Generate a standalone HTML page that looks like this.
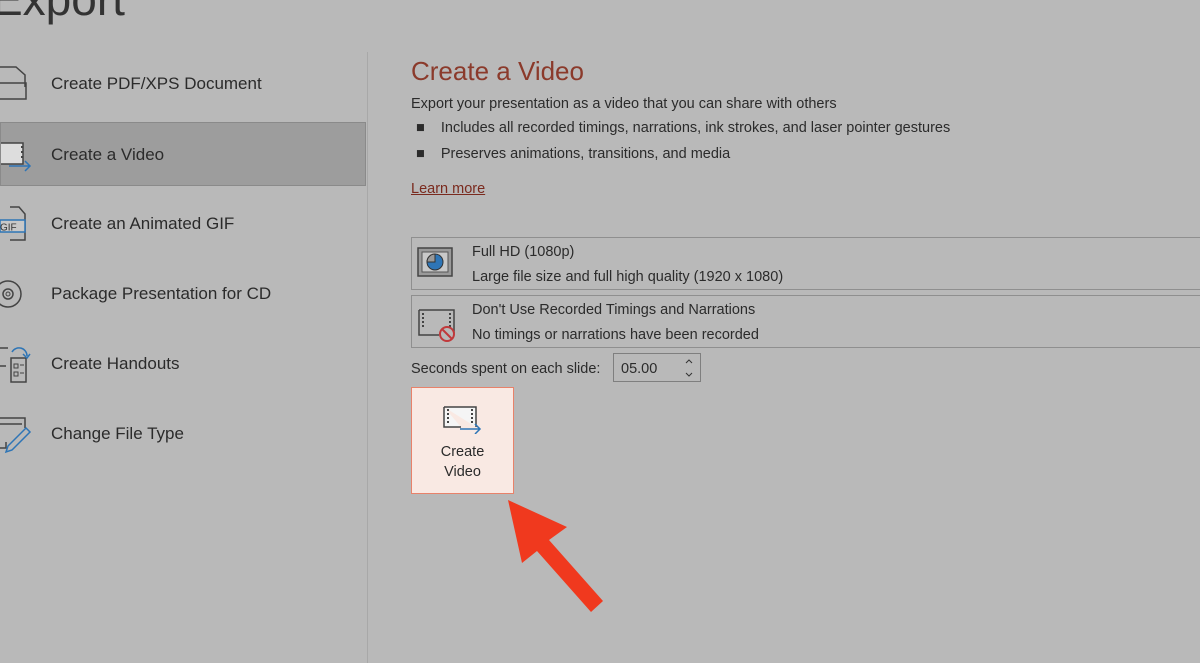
<!DOCTYPE html>
<html><head><style>
body{margin:0;width:1200px;height:663px;background:#b9b9b9;font-family:"Liberation Sans",sans-serif;color:#2b2b2b;position:relative;overflow:hidden}
.a{position:absolute}
.item{position:absolute;left:0;width:366px;height:64px;font-size:17px;line-height:64px}
.item span{position:absolute;left:51px}
.sel{background:#9d9d9d;border:1px solid #8a8a8a;box-sizing:border-box}
.sel span{left:50px}
.box{position:absolute;left:411px;width:800px;height:53px;border:1px solid #8f8f8f;box-sizing:border-box;font-size:14.5px}
</style></head><body>
<div class="a" style="left:-8px;top:-28px;font-size:46px;color:#333;font-weight:300">Export</div>
<div class="a" style="left:367px;top:52px;width:1px;height:611px;background:#a8a8a8"></div>

<div class="item" style="top:52px"><svg class="a" style="left:0;top:14px" width="30" height="36"><path d="M0 1h16l9 8v12M0 17h26v16H0" fill="none" stroke="#444" stroke-width="1.5"/></svg><span>Create PDF/XPS Document</span></div>
<div class="item sel" style="top:122px"><svg class="a" style="left:0;top:19px" width="32" height="30"><path d="M0 1h22v21H0" fill="#ddd" stroke="#444" stroke-width="1.5"/><path d="M21 4v2M21 9v2M21 14v2" stroke="#444" stroke-width="2"/><path d="M8 24h20M24 19l5 5-5 5" fill="none" stroke="#2e75b6" stroke-width="1.5"/></svg><span>Create a Video</span></div>
<div class="item" style="top:192px"><svg class="a" style="left:0;top:14px" width="30" height="36"><path d="M10 1h9l6 7v26H10" fill="none" stroke="#444" stroke-width="1.5"/><rect x="0" y="14" width="25" height="12" fill="#c8c8c8" stroke="#2e75b6" stroke-width="1.5"/><text x="0" y="24.5" font-size="10" font-family="Liberation Sans" fill="#333">GIF</text></svg><span>Create an Animated GIF</span></div>
<div class="item" style="top:262px"><svg class="a" style="left:-6px;top:14px" width="36" height="36"><circle cx="14" cy="18" r="13" fill="none" stroke="#444" stroke-width="1.5"/><circle cx="14" cy="18" r="5" fill="none" stroke="#444" stroke-width="1.5"/><circle cx="14" cy="18" r="2" fill="none" stroke="#444"/></svg><span>Package Presentation for CD</span></div>
<div class="item" style="top:332px"><svg class="a" style="left:0;top:12px" width="32" height="40"><path d="M0 4h8M0 22h6" stroke="#444" stroke-width="1.5"/><rect x="11" y="14" width="15" height="24" fill="none" stroke="#444" stroke-width="1.5"/><path d="M14 20h4v4h-4zM14 28h4v4h-4zM20 21h4M20 29h4" fill="none" stroke="#444"/><path d="M12 8a8 8 0 0 1 15 4M23 10l4 4 3-4" fill="none" stroke="#2e75b6" stroke-width="1.5"/></svg><span>Create Handouts</span></div>
<div class="item" style="top:402px"><svg class="a" style="left:0;top:14px" width="32" height="40"><path d="M0 2h25v10M0 8h22M0 32h6v-6" fill="none" stroke="#444" stroke-width="1.5"/><path d="M26 12l4 4-18 18-6 2 2-6z" fill="none" stroke="#2e75b6" stroke-width="1.5"/></svg><span>Change File Type</span></div>

<div class="a" style="left:411px;top:56px;font-size:26px;color:#8b3a2b">Create a Video</div>
<div class="a" style="left:411px;top:96px;font-size:14.5px">Export your presentation as a video that you can share with others</div>
<div class="a" style="left:416px;top:120px;font-size:14.5px">■&nbsp;&nbsp;&nbsp;&nbsp;Includes all recorded timings, narrations, ink strokes, and laser pointer gestures</div>
<div class="a" style="left:416px;top:146px;font-size:14.5px">■&nbsp;&nbsp;&nbsp;&nbsp;Preserves animations, transitions, and media</div>
<div class="a" style="left:411px;top:181px;font-size:14.5px;color:#7a2a1e;text-decoration:underline">Learn more</div>

<div class="box" style="top:237px"><svg class="a" style="left:5px;top:9px" width="38" height="32"><rect x="1" y="1" width="34" height="28" fill="#9a9a9a" stroke="#444" stroke-width="1.5"/><rect x="5" y="5" width="26" height="20" fill="#c9c9c9" stroke="#555"/><circle cx="18" cy="15" r="8" fill="#2e75b6" stroke="#333"/><path d="M18 15V7a8 8 0 0 0-8 8z" fill="#999" stroke="#333"/></svg><div class="a" style="left:60px;top:6px">Full HD (1080p)</div><div class="a" style="left:60px;top:31px">Large file size and full high quality (1920 x 1080)</div></div>
<div class="box" style="top:295px"><svg class="a" style="left:6px;top:13px" width="40" height="34"><path d="M1 1h35v23M1 1v25h20" fill="none" stroke="#444" stroke-width="1.5"/><path d="M5 4v16M32 4v16" stroke="#444" stroke-width="2" stroke-dasharray="2 2"/><circle cx="29" cy="25" r="7" fill="none" stroke="#c0393b" stroke-width="2"/><path d="M24 20l10 10" stroke="#c0393b" stroke-width="2"/></svg><div class="a" style="left:60px;top:6px">Don't Use Recorded Timings and Narrations</div><div class="a" style="left:60px;top:31px">No timings or narrations have been recorded</div></div>

<div class="a" style="left:411px;top:361px;font-size:14.5px">Seconds spent on each slide:</div>
<div class="a" style="left:613px;top:353px;width:88px;height:29px;border:1px solid #7f7f7f;box-sizing:border-box;font-size:14.5px"><span class="a" style="left:7px;top:7px">05.00</span><svg class="a" style="left:70px;top:4px" width="10" height="20"><path d="M2 5l3-3 3 3M2 15l3 3 3-3" fill="none" stroke="#333" stroke-width="1"/></svg></div>

<div class="a" style="left:411px;top:387px;width:103px;height:107px;background:#f9e9e3;border:1px solid #e8826a;box-sizing:border-box;text-align:center;font-size:14.5px;line-height:20px">
<svg style="display:block;margin:18px auto 0" width="40" height="28"><path d="M1 1h32v20M1 1v20h17" fill="#f5f5f5" stroke="#444" stroke-width="1.5"/><path d="M5 3v16M29 3v14" stroke="#444" stroke-width="2" stroke-dasharray="2 2"/><path d="M17 23h20M32 18l5 5-5 5" fill="none" stroke="#2e75b6" stroke-width="1.5"/></svg>
<div style="margin-top:8px">Create<br>Video</div></div>

<svg class="a" style="left:0;top:0" width="1200" height="663"><path d="M508 500L567 527L549 540L603 601L591 612L537 551L522 563Z" fill="#f0391e"/></svg>
</body></html>
